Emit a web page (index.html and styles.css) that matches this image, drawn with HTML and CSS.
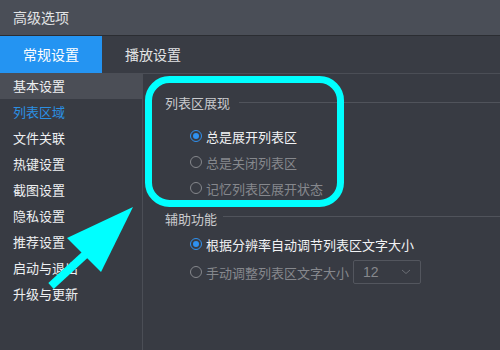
FILE: index.html
```html
<!DOCTYPE html>
<html lang="zh">
<head>
<meta charset="utf-8">
<link rel="stylesheet" href="styles.css">
</head>
<body>
<div class="window">
  <div class="titlebar">高级选项</div>
  <div class="tabs">
    <div class="tab active">常规设置</div>
    <div class="tab">播放设置</div>
  </div>
  <div class="body">
    <ul class="sidebar">
      <li class="item hover">基本设置</li>
      <li class="item selected">列表区域</li>
      <li class="item">文件关联</li>
      <li class="item">热键设置</li>
      <li class="item">截图设置</li>
      <li class="item">隐私设置</li>
      <li class="item">推荐设置</li>
      <li class="item">启动与退出</li>
      <li class="item">升级与更新</li>
    </ul>
    <div class="content">
      <div class="group g1">
        <div class="group-title"><span>列表区展现</span><i class="rule"></i></div>
        <div class="options">
          <label class="radio checked"><span class="dot"></span>总是展开列表区</label>
          <label class="radio disabled"><span class="dot"></span>总是关闭列表区</label>
          <label class="radio disabled"><span class="dot"></span>记忆列表区展开状态</label>
        </div>
      </div>
      <div class="group g2">
        <div class="group-title"><span>辅助功能</span><i class="rule"></i></div>
        <div class="options">
          <label class="radio checked"><span class="dot"></span>根据分辨率自动调节列表区文字大小</label>
          <label class="radio disabled second"><span class="dot"></span>手动调整列表区文字大小
            <span class="select"><span class="val">12</span>
              <svg class="chev" width="10" height="6" viewBox="0 0 10 6"><path d="M1 1 L5 4.5 L9 1" fill="none" stroke="#6b6e75" stroke-width="1"/></svg>
            </span>
          </label>
        </div>
      </div>
    </div>
  </div>
  <svg class="annot" width="500" height="350" viewBox="0 0 500 350">
    <rect x="148.5" y="79.5" width="192" height="124" rx="21" ry="21" fill="none" stroke="#00ffff" stroke-width="7"/>
    <polygon points="133,207 67,238 101,272" fill="#00ffff"/>
    <line x1="88" y1="252" x2="51" y2="286" stroke="#00ffff" stroke-width="8"/>
  </svg>
</div>
</body>
</html>
```
FILE: styles.css
```css
* { box-sizing: border-box; margin: 0; padding: 0; }
html, body { width: 500px; height: 350px; overflow: hidden; }
body { background: #383b43; font-family: "Noto Sans CJK SC", "Noto Sans", sans-serif; }
.window { position: relative; width: 500px; height: 350px; display: flex; flex-direction: column; background: #383b43; }
.titlebar {
  height: 36px; background: #4a4e57; border-bottom: 1px solid #2b2d32;
  color: #e2e3e5; font-size: 14px; line-height: 35px; padding-left: 13px;
}
.tabs { height: 37px; display: flex; background: #393c44; }
.tab { width: 102px; text-align: center; font-size: 14px; line-height: 37px; color: #e3e4e6; }
.tab.active { background: #2494f2; color: #ffffff; }
.body { flex: 1; display: flex; }
.sidebar { list-style: none; width: 143px; border-right: 1px solid #4b4e56; padding-top: 0; }
.item { height: 26px; line-height: 26px; font-size: 13px; color: #eef0f2; padding-left: 13px; }
.item.hover { background: #4b4e56; }
.item.selected { color: #2b90e3; }
.content { flex: 1; border-top: 1px solid #4b4e56; padding-left: 22px; }
.group-title { display: flex; align-items: center; height: 20px; font-size: 13px; color: #c9cacd; }
.group-title .rule { flex: 1; height: 1px; background: #50535b; margin-left: 9px; }
.g1 { padding-top: 18px; }
.g1 .options { margin-top: 11px; }
.g2 { margin-top: 7px; }
.g2 .group-title .rule { margin-left: 6px; transform: translateY(-2px); }
.g2 .options { margin-top: 3px; }
.options { padding-left: 25px; display: flex; flex-direction: column; }
.radio { display: flex; align-items: center; height: 26px; font-size: 13px; color: #f2f3f5; }
.radio .dot {
  width: 12px; height: 12px; border-radius: 50%; border: 1.5px solid #85878c;
  margin-right: 4px; flex: none; position: relative;
}
.radio.checked .dot { border-color: #2f91f0; }
.radio.checked .dot::after {
  content: ""; position: absolute; left: 1.5px; top: 1.5px; width: 6px; height: 6px;
  border-radius: 50%; background: #2f91f0;
}
.radio.disabled { color: #86888d; }
.radio.second { margin-top: 2px; }
.select {
  display: flex; align-items: center; justify-content: space-between;
  width: 68px; height: 24px; margin-left: 4px; border: 1px solid #53565e; border-radius: 2px;
  padding: 0 9px 0 9px; color: #86888d; font-family: "Liberation Sans", sans-serif; font-size: 14px;
}
.annot { position: absolute; left: 0; top: 0; pointer-events: none; }
```
